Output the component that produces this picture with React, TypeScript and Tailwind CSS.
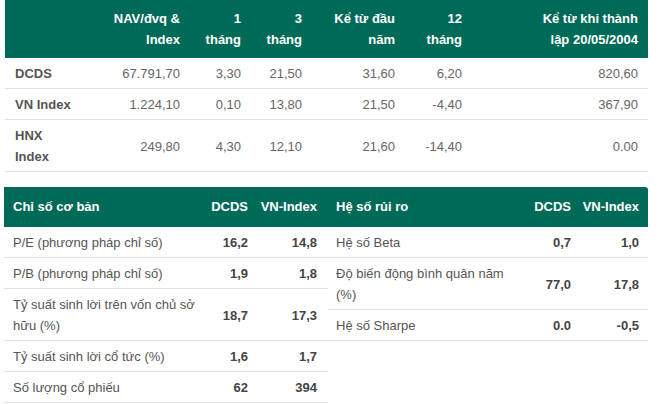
const green = "bg-[#006a58]";

const perfHead = "px-[10px] pt-[8px] pb-[8px] text-right text-[13px] font-bold leading-[21px] text-white";
const perfLabel = "px-[10px] pt-[5px] pb-[4px] text-[13px] font-bold leading-[21px] text-[#555] border-b border-[#e2e2e2] flex items-center";
const perfNum = "px-[10px] pt-[5px] pb-[4px] text-right text-[13px] leading-[21px] text-[#666] border-b border-[#e2e2e2] flex items-center justify-end";

const perfRows = [
  { name: "DCDS", vals: ["67.791,70", "3,30", "21,50", "31,60", "6,20", "820,60"] },
  { name: "VN Index", vals: ["1.224,10", "0,10", "13,80", "21,50", "-4,40", "367,90"] },
  { name: "HNX Index", vals: ["249,80", "4,30", "12,10", "21,60", "-14,40", "0.00"] },
];

const basicRows = [
  ["P/E (phương pháp chỉ số)", "16,2", "14,8"],
  ["P/B (phương pháp chỉ số)", "1,9", "1,8"],
  ["Tỷ suất sinh lời trên vốn chủ sở hữu (%)", "18,7", "17,3"],
  ["Tỷ suất sinh lời cổ tức (%)", "1,6", "1,7"],
  ["Số lượng cổ phiếu", "62", "394"],
];

const riskRows = [
  ["Hệ số Beta", "0,7", "1,0"],
  ["Độ biến động bình quân năm (%)", "77,0", "17,8"],
  ["Hệ số Sharpe", "0.0", "-0,5"],
];

const cell = "pt-[5px] pb-[4px] text-[13px] leading-[21px] border-b border-[#e2e2e2] flex items-center";

function RatioTable({
  title,
  rows,
  cols,
  labelPad,
  lastPad,
  rounded,
}: {
  title: string;
  rows: string[][];
  cols: string;
  labelPad: string;
  lastPad: string;
  rounded?: boolean;
}) {
  return (
    <div className={"grid " + cols}>
      {/* header band */}
      <div className={`${green} ${labelPad} pr-[8px] h-[40px] flex items-center text-[13px] font-bold text-white`}>
        {title}
      </div>
      <div className={`${green} pr-[9px] h-[40px] flex items-center justify-end text-[13px] font-bold text-white`}>
        DCDS
      </div>
      <div
        className={`${green} ${lastPad} h-[40px] flex items-center justify-end text-[13px] font-bold text-white ${
          rounded ? "rounded-tr-[3px]" : ""
        }`}
      >
        VN-Index
      </div>
      {rows.map((r) => (
        <div key={r[0]} className="contents">
          <div className={`${cell} ${labelPad} pr-[6px] text-[#555]`}>{r[0]}</div>
          <div className={`${cell} pr-[9px] justify-end font-bold text-[#444]`}>{r[1]}</div>
          <div className={`${cell} ${lastPad} justify-end font-bold text-[#444]`}>{r[2]}</div>
        </div>
      ))}
    </div>
  );
}

export default function App() {
  return (
    <div className="w-[660px] h-[404px] overflow-hidden bg-white font-['Liberation_Sans',Arial,sans-serif]">
      {/* Performance table */}
      <div className="ml-[5px] w-[643px] grid grid-cols-[80px_105px_61px_61px_93px_67px_1fr]">
        <div className={`${green} ${perfHead}`} />
        <div className={`${green} ${perfHead}`}>
          NAV/đvq &amp;
          <br />
          Index
        </div>
        <div className={`${green} ${perfHead}`}>
          1<br />
          tháng
        </div>
        <div className={`${green} ${perfHead}`}>
          3<br />
          tháng
        </div>
        <div className={`${green} ${perfHead}`}>
          Kể từ đầu
          <br />
          năm
        </div>
        <div className={`${green} ${perfHead}`}>
          12
          <br />
          tháng
        </div>
        <div className={`${green} ${perfHead}`}>
          Kể từ khi thành
          <br />
          lập 20/05/2004
        </div>
        {perfRows.map((r) => (
          <div key={r.name} className="contents">
            <div className={perfLabel}>{r.name}</div>
            {r.vals.map((v, i) => (
              <div key={i} className={perfNum}>
                {v}
              </div>
            ))}
          </div>
        ))}
      </div>

      {/* Ratio tables */}
      <div className="mt-[15px] ml-[4px] w-[644px] flex items-start">
        <div className="w-[324px]">
          <RatioTable
            title="Chỉ số cơ bản"
            rows={basicRows}
            cols="grid-cols-[199px_54px_71px]"
            labelPad="pl-[9px]"
            lastPad="pr-[11px]"
          />
        </div>
        <div className="w-[320px]">
          <RatioTable
            title="Hệ số rủi ro"
            rows={riskRows}
            cols="grid-cols-[187px_65px_68px]"
            labelPad="pl-[8px]"
            lastPad="pr-[9px]"
            rounded
          />
        </div>
      </div>
    </div>
  );
}
